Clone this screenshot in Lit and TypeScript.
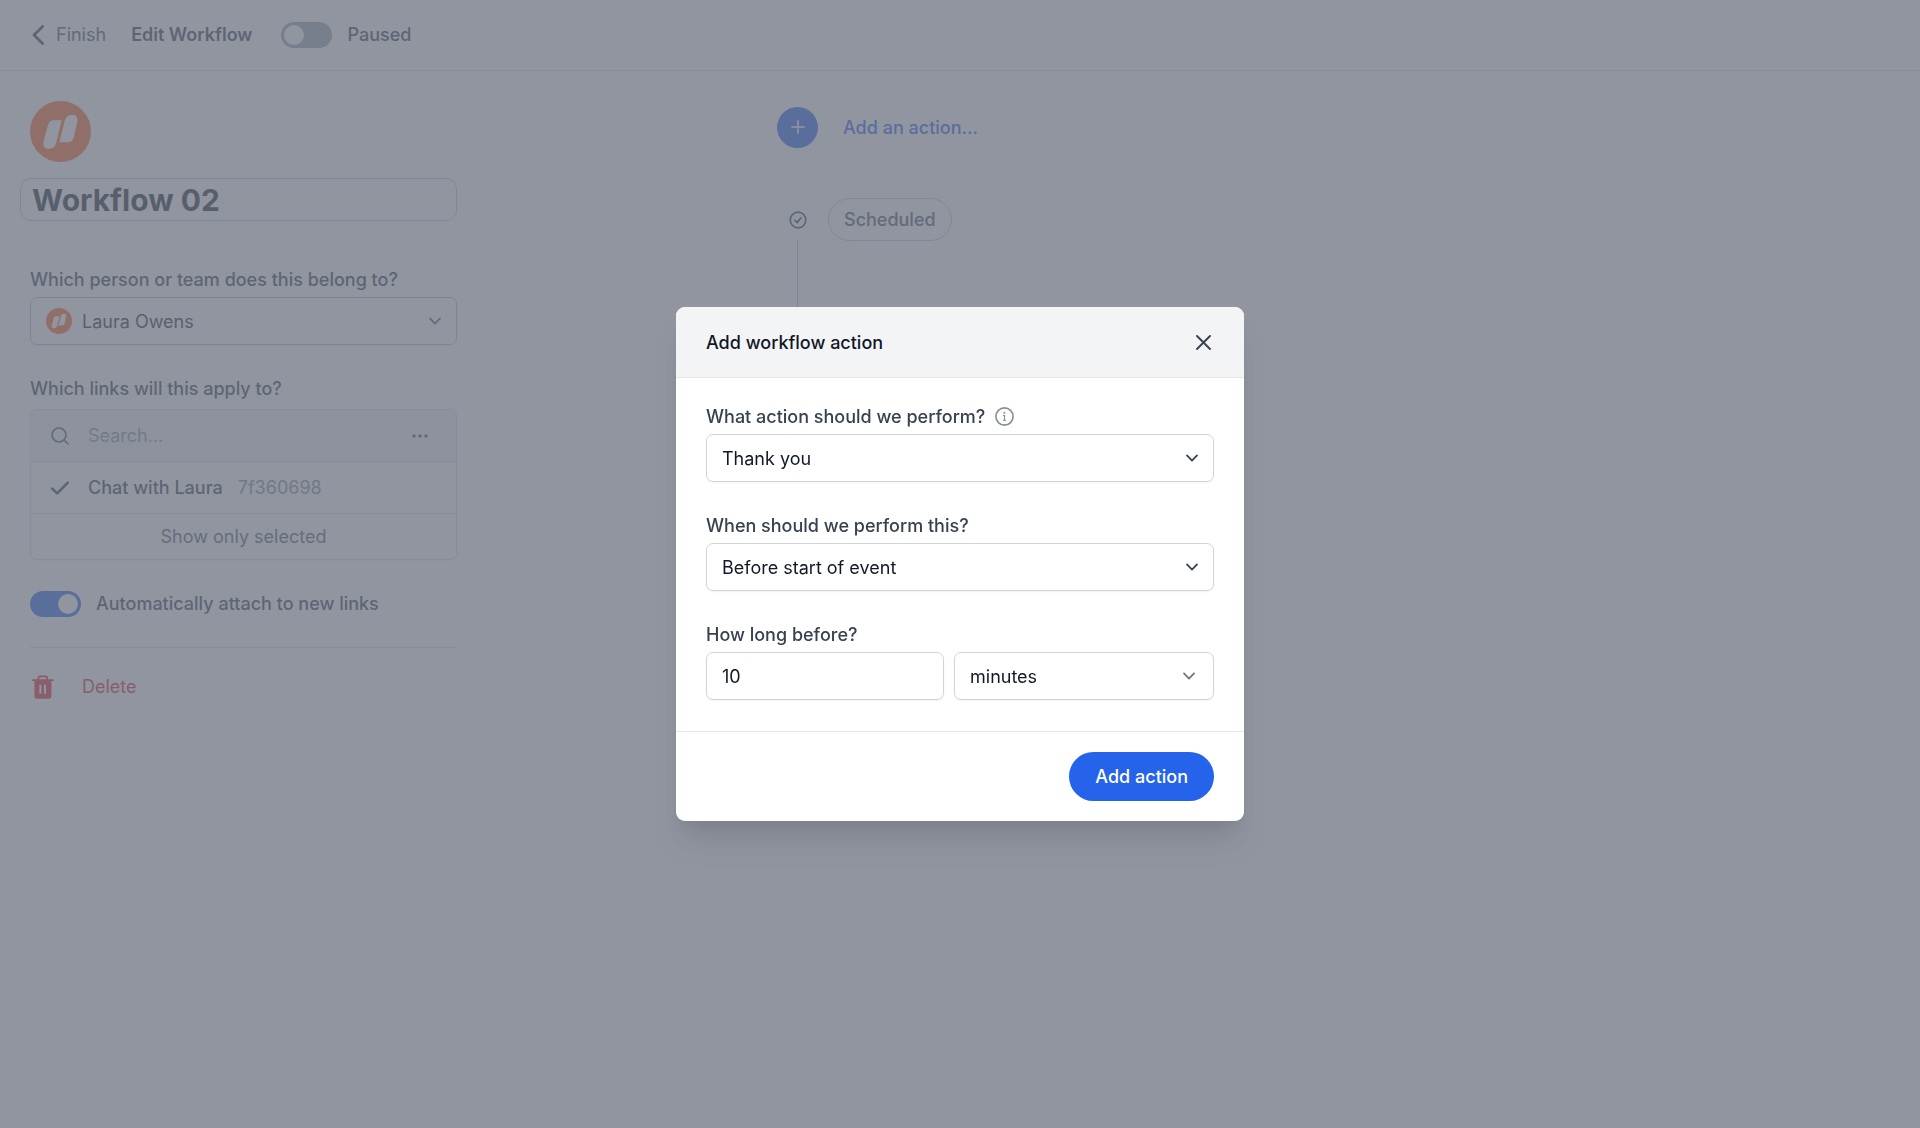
import { LitElement, html, svg, css } from "lit";
import { customElement } from "lit/decorators.js";

const chevronDown = html`<svg class="chevron" viewBox="0 0 12 8" aria-hidden="true">
  <path d="M1 1.4 L6 6.6 L11 1.4" fill="none" stroke="currentColor" stroke-width="1.7" stroke-linecap="round" stroke-linejoin="round" />
</svg>`;

const logo = (cls: string) => html`<svg class=${cls} viewBox="0 0 183 183" aria-hidden="true">
  <circle cx="91.5" cy="91.5" r="91.5" fill="#ff6a2b" />
  <g fill="#fff">
    <path d="M95 58 H72 Q58 58 54 72 L41 120 C37 135 45 144 58 143 C70 142 76 136 79 124 Z" />
    <path d="M88 124 L104 60 C108 47 116 41 126 41 C139 41 145 50 142 62 L130 112 Q126 124 114 124 Z" />
  </g>
</svg>`;

const line = (d: string, width: number) =>
  svg`<path d=${d} fill="none" stroke="currentColor" stroke-width=${width} stroke-linecap="round" stroke-linejoin="round" />`;

@customElement("app-root")
export class AppRoot extends LitElement {
  static styles = css`
    :host {
      display: block;
      font-family: Inter, "Liberation Sans", sans-serif;
      font-size: 18px;
      line-height: 27px;
      color: #374151;
      background: #fff;
    }
    * {
      box-sizing: border-box;
    }
    svg {
      display: block;
      flex: none;
    }
    h1, h2, p, ul {
      margin: 0;
      padding: 0;
      font-size: inherit;
    }
    input, select, button {
      font: inherit;
      color: inherit;
      margin: 0;
    }
    button {
      border: 0;
      padding: 0;
      background: none;
      cursor: pointer;
    }
    .page {
      display: flex;
      flex-direction: column;
      min-height: 100vh;
    }
    .topbar {
      display: flex;
      align-items: center;
      height: 71px;
      padding: 0 32px 1px;
      border-bottom: 1px solid #e5e7eb;
    }
    .back {
      display: flex;
      align-items: center;
      gap: 12px;
      color: #4b5563;
      text-decoration: none;
    }
    .back svg {
      width: 12px;
      height: 20px;
      color: #374151;
    }
    .heading {
      margin-left: 25px;
      font-weight: 600;
      color: #374151;
    }
    .topbar .toggle-row {
      margin-left: 29px;
    }
    .toggle-row {
      display: flex;
      align-items: center;
      gap: 15px;
      font-weight: 500;
      color: #374151;
    }
    .toggle {
      appearance: none;
      display: flex;
      width: 51px;
      height: 26px;
      padding: 3px;
      border-radius: 13px;
      background: #9ca3af;
      cursor: pointer;
    }
    .toggle::before {
      content: "";
      width: 20px;
      height: 20px;
      border-radius: 50%;
      background: #fff;
    }
    .toggle:checked {
      justify-content: flex-end;
      background: #2563eb;
    }
    .content {
      display: grid;
      grid-template-columns: 488px 1fr;
      flex: 1;
    }
    .sidebar {
      padding: 30px 31px 30px 30px;
    }
    .brand {
      width: 61px;
      height: 61px;
    }
    .title {
      display: block;
      width: calc(100% + 10px);
      height: 43px;
      margin: 16px 0 45px -10px;
      padding: 0 11px;
      border: 1px solid #c3c8d0;
      border-radius: 11px;
      background: none;
      font-size: 30px;
      font-weight: 700;
      color: #1f2937;
    }
    .field {
      display: flex;
      flex-direction: column;
      gap: 4px;
      margin-bottom: 30px;
    }
    .field-label {
      display: flex;
      align-items: center;
      gap: 10px;
      font-weight: 500;
    }
    .control {
      display: grid;
      align-items: center;
    }
    .control > * {
      grid-area: 1 / 1;
    }
    .box {
      appearance: none;
      width: 100%;
      height: 48px;
      padding: 0 15px;
      border: 1px solid #d1d5db;
      border-radius: 7px;
      background: #fff;
      color: #111827;
      box-shadow: 0 1px 2px rgba(0, 0, 0, 0.05);
    }
    .control .chevron {
      width: 12px;
      height: 8px;
      margin-right: 16px;
      justify-self: end;
      pointer-events: none;
      color: #374151;
    }
    .owner .box {
      padding-left: 51px;
      border-color: #b9bec8;
      color: #1f2937;
    }
    .owner .chevron {
      color: #4b5563;
    }
    .owner .small-brand {
      width: 26px;
      height: 26px;
      margin-left: 16px;
      pointer-events: none;
    }
    .panel {
      margin: 7px 0 30px;
      border: 1px solid #d8dbe0;
      border-radius: 7px;
      overflow: hidden;
      box-shadow: 0 1px 2px rgba(0, 0, 0, 0.05);
    }
    .row {
      display: flex;
      align-items: center;
      gap: 19px;
      height: 52px;
      padding: 0 20px;
      border-bottom: 1px solid #d8dbe0;
    }
    .row svg {
      width: 18px;
      height: 18px;
    }
    .search-row {
      background: #f3f4f6;
      color: #4b5563;
    }
    .search {
      flex: 1;
      min-width: 0;
      padding: 0;
      border: 0;
      background: none;
      outline: 0;
    }
    .search::placeholder {
      color: #8b93a1;
      opacity: 1;
    }
    .search-row .more svg {
      width: 16px;
      height: 6px;
      margin-right: 8px;
    }
    .link-name {
      font-weight: 500;
      margin-right: -4px;
    }
    .link-id {
      color: #848c9a;
    }
    .show-selected {
      width: 100%;
      height: 45px;
      color: #566070;
    }
    .danger {
      margin-top: 30px;
      padding: 25px 0 0 2px;
      border-top: 1px solid #d8dbe0;
    }
    .danger button {
      display: flex;
      align-items: center;
      gap: 28px;
      color: #dc2626;
    }
    .danger svg {
      width: 22px;
      height: 24px;
    }
    .canvas {
      display: flex;
      justify-content: center;
      padding: 30px 0;
    }
    .timeline {
      width: 854px;
      list-style: none;
    }
    .step {
      display: grid;
      grid-template-columns: 41px 1fr;
      align-items: center;
      justify-items: center;
    }
    .add {
      display: flex;
      align-items: center;
      gap: 25px;
      height: 52px;
      margin-bottom: 45px;
      font-weight: 500;
      color: #2563eb;
    }
    .plus {
      display: grid;
      place-items: center;
      width: 41px;
      height: 41px;
      border-radius: 50%;
      background: #2563eb;
      color: #fff;
    }
    .plus svg {
      width: 14px;
      height: 14px;
    }
    .step svg {
      width: 18px;
      height: 18px;
      color: #374151;
    }
    .pill {
      justify-self: start;
      margin-left: 10px;
      padding: 7px 15px;
      border: 1px solid #c3c8d0;
      border-radius: 22px;
      font-weight: 500;
      color: #4b5563;
    }
    .stem {
      width: 1px;
      height: 160px;
      background: #b9bec8;
    }
    .overlay {
      position: fixed;
      inset: 0;
      display: grid;
      place-items: center;
      background: rgba(107, 114, 128, 0.75);
    }
    .modal {
      width: min(568px, 100%);
      border-radius: 9px;
      overflow: hidden;
      background: #fff;
      box-shadow: 0 25px 32px -6px rgba(0, 0, 0, 0.1), 0 12px 13px -6px rgba(0, 0, 0, 0.06);
    }
    .modal-head {
      display: flex;
      align-items: center;
      justify-content: space-between;
      height: 71px;
      padding: 0 30px;
      border-bottom: 1px solid #e5e7eb;
      background: #f3f4f6;
    }
    .modal-head h2 {
      font-weight: 500;
      color: #111827;
    }
    .close {
      padding: 3px;
      color: #374151;
    }
    .close svg {
      width: 15px;
      height: 15px;
    }
    .modal-body {
      padding: 25px 30px 1px;
    }
    .info {
      width: 19px;
      height: 19px;
      color: #858c99;
    }
    .duration {
      display: grid;
      grid-template-columns: 238px 1fr;
      gap: 10px;
    }
    .duration .chevron {
      margin-right: 19px;
      color: #6b7280;
    }
    .modal-foot {
      display: flex;
      justify-content: flex-end;
      padding: 20px 30px;
      border-top: 1px solid #e5e7eb;
    }
    .primary {
      height: 49px;
      padding: 0 26px;
      border-radius: 25px;
      background: #2563eb;
      color: #fff;
      font-weight: 500;
    }
  `;

  render() {
    return html`
      <div class="page">
        <header class="topbar">
          <a class="back" href="#">
            <svg viewBox="0 0 12 20" aria-hidden="true">${line("M10.6 1.4 L2 10 L10.6 18.6", 2.8)}</svg>
            <span>Finish</span>
          </a>
          <h1 class="heading">Edit Workflow</h1>
          <label class="toggle-row">
            <input class="toggle" type="checkbox" role="switch" />
            <span>Paused</span>
          </label>
        </header>
        <div class="content">
          <aside class="sidebar">
            ${logo("brand")}
            <input class="title" type="text" aria-label="Workflow name" .value=${"Workflow 02"} />
            <div class="field">
              <label class="field-label" for="owner">Which person or team does this belong to?</label>
              <div class="control owner">
                <select class="box" id="owner"><option>Laura Owens</option></select>
                ${logo("small-brand")}${chevronDown}
              </div>
            </div>
            <label class="field-label" for="search">Which links will this apply to?</label>
            <div class="panel">
              <div class="row search-row">
                <svg viewBox="0 0 18 18" aria-hidden="true">
                  <circle cx="8" cy="8" r="7" fill="none" stroke="currentColor" stroke-width="1.7" />
                  ${line("M13 13 L17 17", 1.7)}
                </svg>
                <input class="search" id="search" type="search" placeholder="Search..." />
                <button class="more" aria-label="More options">
                  <svg viewBox="0 0 16 6" fill="currentColor" aria-hidden="true">
                    <circle cx="2" cy="3" r="1.8" /><circle cx="8" cy="3" r="1.8" /><circle cx="14" cy="3" r="1.8" />
                  </svg>
                </button>
              </div>
              <div class="row">
                <svg viewBox="0 0 18 18" aria-hidden="true">${line("M1.2 9.6 L6.2 14.4 L16.8 3.6", 2.6)}</svg>
                <span class="link-name">Chat with Laura</span>
                <span class="link-id">7f360698</span>
              </div>
              <button class="show-selected">Show only selected</button>
            </div>
            <label class="toggle-row">
              <input class="toggle" type="checkbox" role="switch" checked />
              <span>Automatically attach to new links</span>
            </label>
            <div class="danger">
              <button>
                <svg viewBox="0 0 22 24" aria-hidden="true">
                  ${line("M1 5.2 H21", 1.8)}
                  ${line("M6.4 5 V3.2 Q6.4 1.4 8.2 1.4 H13.4 Q15.2 1.4 15.2 3.2 V5", 1.8)}
                  <path fill="currentColor" fill-rule="evenodd" d="M2.4 5 H19.4 V21 Q19.4 23.8 16.8 23.8 H5 Q2.4 23.8 2.4 21 Z M7.4 9.8 V18.8 H9.4 V9.8 Z M12 9.8 V18.8 H14 V9.8 Z" />
                </svg>
                <span>Delete</span>
              </button>
            </div>
          </aside>
          <main class="canvas">
            <ul class="timeline">
              <li>
                <button class="add">
                  <span class="plus"><svg viewBox="0 0 14 14" aria-hidden="true">${line("M7 0.8 V13.2 M0.8 7 H13.2", 1.6)}</svg></span>
                  <span>Add an action...</span>
                </button>
              </li>
              <li class="step">
                <svg viewBox="0 0 18 18" aria-hidden="true">
                  <circle cx="9" cy="9" r="7.8" fill="none" stroke="currentColor" stroke-width="1.7" />
                  ${line("M6 9.4 L8.2 11.6 L12 6.8", 1.7)}
                </svg>
                <span class="pill">Scheduled</span>
                <span class="stem"></span>
              </li>
            </ul>
          </main>
        </div>
      </div>
      <div class="overlay">
        <section class="modal" role="dialog" aria-modal="true" aria-labelledby="dialog-title">
          <header class="modal-head">
            <h2 id="dialog-title">Add workflow action</h2>
            <button class="close" aria-label="Close">
              <svg viewBox="0 0 15 15" aria-hidden="true">${line("M1 1 L14 14 M14 1 L1 14", 1.9)}</svg>
            </button>
          </header>
          <div class="modal-body">
            <div class="field">
              <label class="field-label" for="action">
                What action should we perform?
                <svg class="info" viewBox="0 0 19 19" aria-hidden="true">
                  <circle cx="9.5" cy="9.5" r="8.6" fill="none" stroke="currentColor" stroke-width="1.6" />
                  <circle cx="9.4" cy="5.8" r="1" fill="currentColor" />
                  ${line("M8.4 8.6 H9.6 V13.2 M8.4 13.3 H10.8", 1.1)}
                </svg>
              </label>
              <div class="control">
                <select class="box" id="action"><option>Thank you</option></select>
                ${chevronDown}
              </div>
            </div>
            <div class="field">
              <label class="field-label" for="timing">When should we perform this?</label>
              <div class="control">
                <select class="box" id="timing"><option>Before start of event</option></select>
                ${chevronDown}
              </div>
            </div>
            <div class="field">
              <label class="field-label" for="amount">How long before?</label>
              <div class="duration">
                <input class="box" id="amount" type="text" inputmode="numeric" .value=${"10"} />
                <div class="control">
                  <select class="box" aria-label="Unit"><option>minutes</option></select>
                  ${chevronDown}
                </div>
              </div>
            </div>
          </div>
          <footer class="modal-foot">
            <button class="primary">Add action</button>
          </footer>
        </section>
      </div>
    `;
  }
}
